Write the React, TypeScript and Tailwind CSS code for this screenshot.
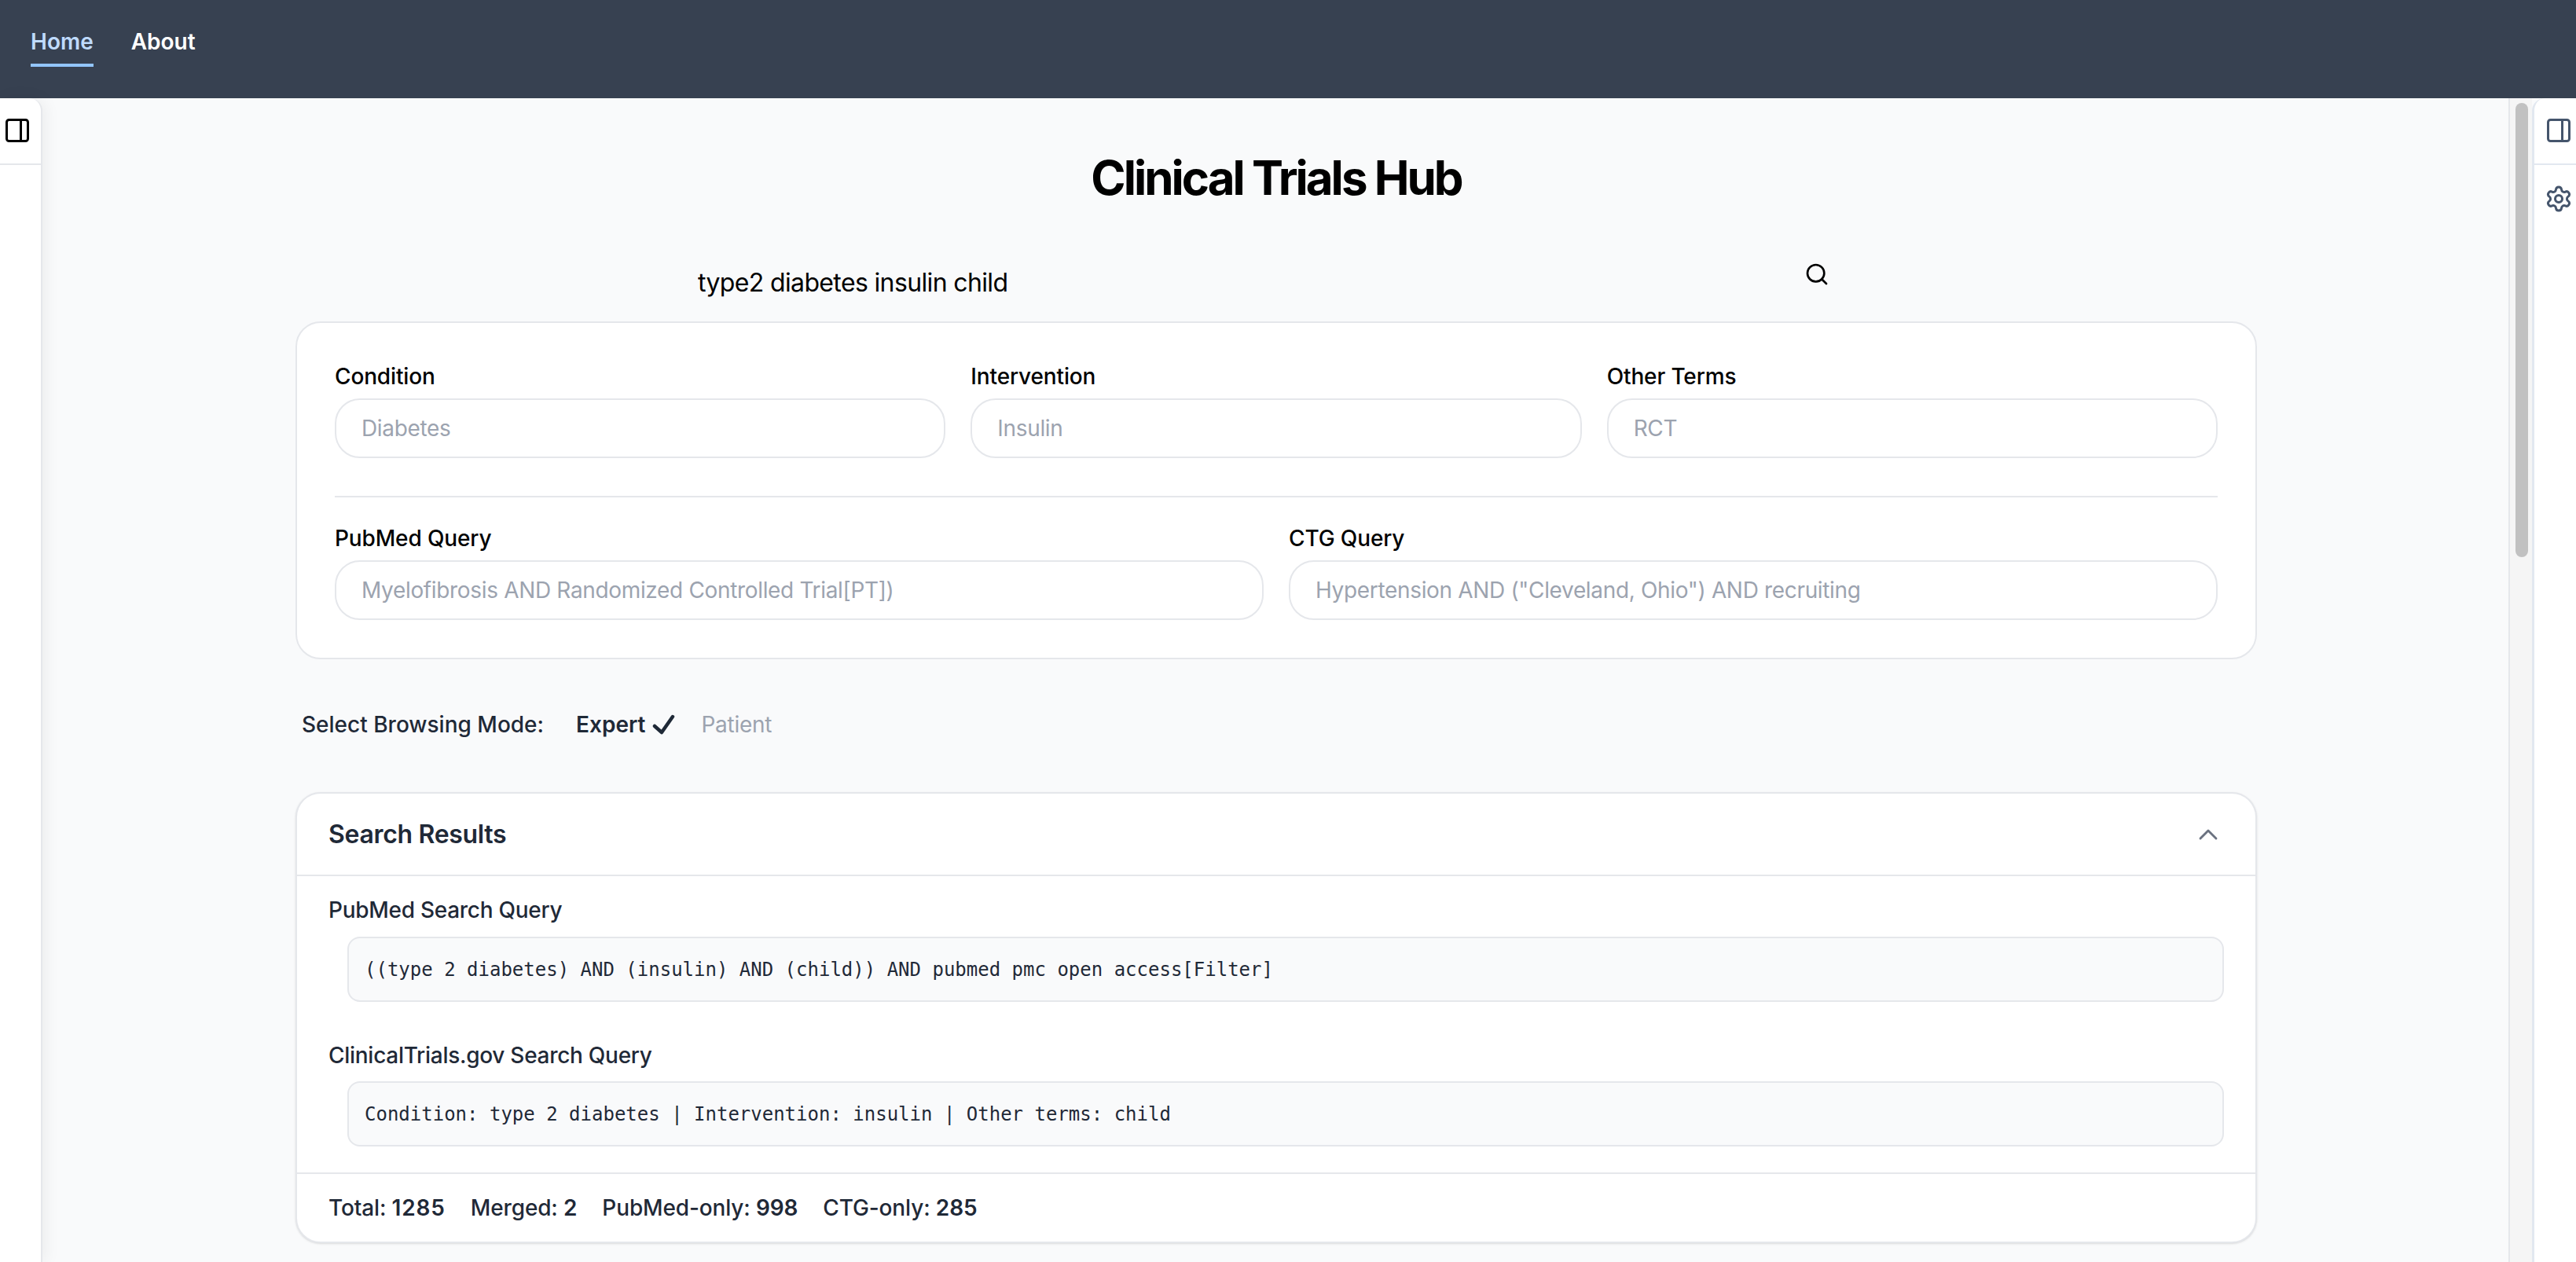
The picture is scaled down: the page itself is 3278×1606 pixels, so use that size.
import { ChevronUp, PanelRight, Search, Settings } from "lucide-react";

const inputClass =
  "h-[76px] w-full rounded-[32px] border-2 border-[#e5e7eb] bg-white px-[32px] text-[28px] tracking-[-0.012em] text-[#111827] outline-none placeholder:text-[#9ca3af]";

function Field({ label, placeholder }: { label: string; placeholder: string }) {
  return (
    <div className="flex flex-col">
      <label className="mb-[8px] text-[28px] leading-[40px] font-medium tracking-[-0.005em] text-black">{label}</label>
      <input className={inputClass} placeholder={placeholder} readOnly />
    </div>
  );
}

function QueryBlock({
  label,
  query,
  className,
  labelClass,
}: {
  label: string;
  query: string;
  className: string;
  labelClass: string;
}) {
  return (
    <div className={className}>
      <div className={labelClass}>{label}</div>
      <div className="ml-[24px] flex h-[83px] items-center rounded-[16px] border-2 border-[#e5e7eb] bg-[#f9fafb] px-[20px] pt-[1px] font-['DejaVu_Sans_Mono',monospace] text-[24px] text-[#1f2937]">
        {query}
      </div>
    </div>
  );
}

function Stat({ label, value, valueClass }: { label: string; value: string; valueClass: string }) {
  return (
    <span className="text-[28px] font-medium tracking-[-0.005em] text-[#1f2937]">
      {label} <span className={valueClass}>{value}</span>
    </span>
  );
}

export default function App() {
  return (
    <div className="flex h-screen flex-col overflow-hidden bg-[#374151] font-['Inter',sans-serif]">
      <nav className="flex h-[125px] shrink-0 items-start gap-[48px] bg-[#374151] pt-[33px] pl-[39px] text-[28px] leading-[40px] font-semibold">
        <a className="border-b-[4px] border-[#93c5fd] pb-[8px] text-[#bfdbfe]">Home</a>
        <a className="text-white">About</a>
      </nav>
      <div className="flex min-h-0 flex-1 bg-[#f9fafb]">
        <aside className="z-10 w-[54px] shrink-0 rounded-tr-[16px] border-r-2 border-[#e5e7eb] bg-white shadow-[4px_0_20px_rgba(0,0,0,0.06)]">
          <div className="flex h-[85px] items-center border-b-2 border-[#e5e7eb] pb-[2px] pl-[4px] text-black">
            <PanelRight size={36} strokeWidth={2} />
          </div>
        </aside>
        <main className="min-w-0 flex-1 overflow-hidden border-r-2 border-[#e5e7eb] bg-[#f9fafb] pl-[2px]">
          <div className="mx-auto w-[2496px]">
            <h1 className="mt-[65px] text-center text-[60px] leading-[72px] font-bold tracking-[-0.05em] text-black">
              Clinical Trials Hub
            </h1>
            <div className="mt-[71px] mb-[29px] flex items-start pr-[544px] pl-[512px]">
              <input
                className="mt-[7px] h-[40px] flex-1 bg-transparent text-[32px] tracking-[-0.02em] text-black outline-none"
                value="type2 diabetes insulin child"
                readOnly
              />
              <Search size={32} strokeWidth={2} className="text-black" />
            </div>
            <section className="rounded-[32px] border-2 border-[#e5e7eb] bg-white p-[48px]">
              <div className="grid grid-cols-3 gap-[32px]">
                <Field label="Condition" placeholder="Diabetes" />
                <Field label="Intervention" placeholder="Insulin" />
                <Field label="Other Terms" placeholder="RCT" />
              </div>
              <div className="mt-[48px] mb-[32px] h-[2px] bg-[#e5e7eb]" />
              <div className="grid grid-cols-2 gap-[32px]">
                <Field label="PubMed Query" placeholder="Myelofibrosis AND Randomized Controlled Trial[PT])" />
                <Field label="CTG Query" placeholder={'Hypertension AND ("Cleveland, Ohio") AND recruiting'} />
              </div>
            </section>
            <div className="mt-[63px] mb-[66px] flex h-[40px] items-center pl-[8px] text-[28px] font-medium">
              <span className="text-[#1f2937]">Select Browsing Mode:</span>
              <span className="ml-[41px] font-semibold text-[#1f2937]">Expert</span>
              <svg
                width="30"
                height="28"
                viewBox="0 0 30 28"
                fill="none"
                stroke="#1f2937"
                strokeWidth="4.5"
                strokeLinecap="round"
                strokeLinejoin="round"
                className="ml-[9px]"
              >
                <polyline points="3,16 12,24 26,4" />
              </svg>
              <span className="ml-[32px] font-normal tracking-[-0.01em] text-[#9ca3af]">Patient</span>
            </div>
            <section className="rounded-[32px] border-2 border-[#e5e7eb] bg-white shadow-sm">
              <div className="flex h-[105px] items-center justify-between border-b-2 border-[#e5e7eb] px-[40px]">
                <h2 className="text-[32px] font-semibold tracking-[-0.01em] text-[#1f2937]">Search Results</h2>
                <ChevronUp size={40} strokeWidth={1.7} className="text-[#6b7280]" />
              </div>
              <div className="border-b-2 border-[#e5e7eb] px-[40px] pt-[25px] pb-[33px]">
                <QueryBlock
                  className=""
                  labelClass="mb-[16px] text-[28px] leading-[36px] font-medium tracking-[-0.01em] text-[#1f2937]"
                  label="PubMed Search Query"
                  query="((type 2 diabetes) AND (insulin) AND (child)) AND pubmed pmc open access[Filter]"
                />
                <QueryBlock
                  className="mt-[50px]"
                  labelClass="mb-[15px] text-[28px] leading-[36px] font-medium tracking-[-0.01em] text-[#1f2937]"
                  label="ClinicalTrials.gov Search Query"
                  query="Condition: type 2 diabetes | Intervention: insulin | Other terms: child"
                />
              </div>
              <div className="flex h-[86px] items-center gap-[32px] px-[40px]">
                <Stat label="Total:" value="1285" valueClass="font-semibold tracking-[0.03em]" />
                <Stat label="Merged:" value="2" valueClass="font-semibold" />
                <Stat label="PubMed-only:" value="998" valueClass="font-semibold" />
                <Stat label="CTG-only:" value="285" valueClass="font-semibold" />
              </div>
            </section>
          </div>
        </main>
        <div className="flex w-[28px] shrink-0 justify-center bg-[#f5f5f5] pt-[6px] pl-[2px]">
          <div className="h-[578px] w-[16px] rounded-full bg-[#c1c1c1]" />
        </div>
        <aside className="z-10 w-[56px] shrink-0 rounded-tl-[16px] border-l-[3px] border-slate-200 bg-white">
          <div className="flex h-[85px] items-center justify-center border-b-2 border-slate-200 pb-[2px] pl-[8px] text-slate-600">
            <PanelRight size={36} strokeWidth={2} />
          </div>
          <div className="mt-[25px] flex justify-center pl-[8px] text-slate-600">
            <Settings size={36} strokeWidth={2} />
          </div>
        </aside>
      </div>
    </div>
  );
}
